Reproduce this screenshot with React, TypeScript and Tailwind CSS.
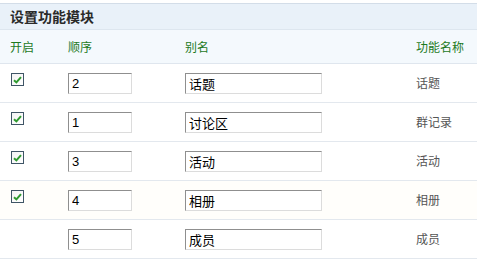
const rows = [
  { on: true, order: "2", alias: "话题", name: "话题" },
  { on: true, order: "1", alias: "讨论区", name: "群记录" },
  { on: true, order: "3", alias: "活动", name: "活动" },
  { on: true, order: "4", alias: "相册", name: "相册", warm: true },
  { on: false, order: "5", alias: "成员", name: "成员" },
];

const cjk = { fontFamily: '"Noto Sans CJK SC", "Liberation Sans", sans-serif' };

function Check() {
  return (
    <span className="flex h-[13px] w-[13px] items-center justify-center border border-[#3f5566] bg-gradient-to-br from-[#f4f4f4] to-[#ffffff]">
      <svg width="9" height="8" viewBox="0 0 9 8">
        <path d="M1 4.2 L3.4 6.4 L8 1.2" fill="none" stroke="#2f9a2f" strokeWidth="2" />
      </svg>
    </span>
  );
}

const inputCls =
  "h-[21px] border border-t-[#8f8f8f] border-l-[#8f8f8f] border-r-[#dcdcdc] border-b-[#dcdcdc] bg-white px-[3px] text-[13px] text-black outline-none";

export default function App() {
  return (
    <div className="h-[261px] w-[477px] bg-white pt-[3px]" style={cjk}>
      <div className="flex h-[27px] items-center border-t border-b border-t-[#d3dde8] border-b-[#dde6ef] bg-[#e9f1f9] pl-[10px] text-[14px] font-bold text-[#2a2a2a]">
        设置功能模块
      </div>
      <div className="grid h-[34px] grid-cols-[68px_117px_231px_1fr] items-center border-b border-[#dfe6ee] bg-[#f4f9fd] text-[12px] text-[#1d7a1d]">
        <span className="pl-[10px]">开启</span>
        <span>顺序</span>
        <span>别名</span>
        <span>功能名称</span>
      </div>
      {rows.map((r) => (
        <div
          key={r.order}
          className={`grid h-[39px] grid-cols-[68px_117px_231px_1fr] items-center border-b border-[#e3e8ee] text-[12px] text-[#555] ${r.warm ? "bg-[#fffefb]" : "bg-white"}`}
        >
          <div className="self-start pl-[11px] pt-[9px]">{r.on && <Check />}</div>
          <div>
            <input
              className={`${inputCls} w-[64px]`}
              style={{ fontFamily: '"Liberation Sans", sans-serif' }}
              defaultValue={r.order}
            />
          </div>
          <div>
            <input className={`${inputCls} w-[137px]`} style={cjk} defaultValue={r.alias} />
          </div>
          <span>{r.name}</span>
        </div>
      ))}
    </div>
  );
}
